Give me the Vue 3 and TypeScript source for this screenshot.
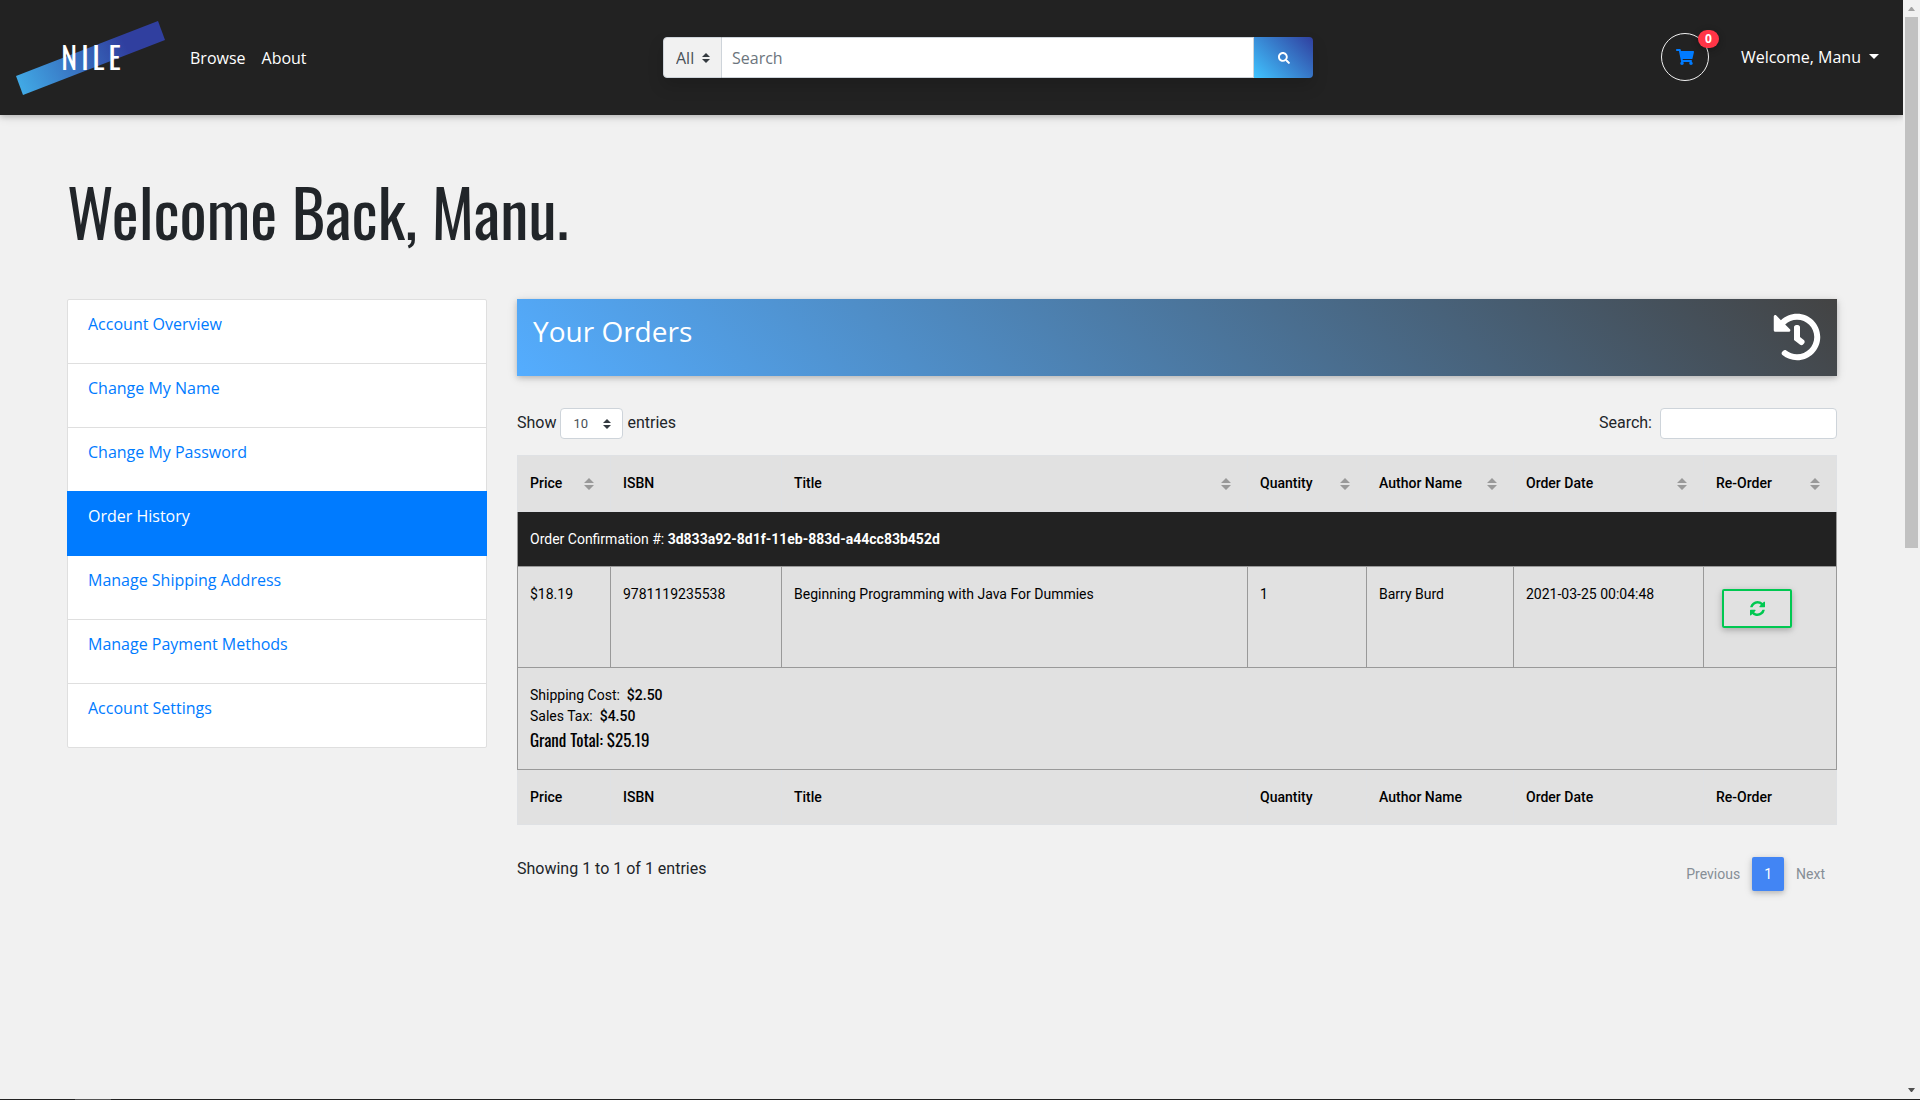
<script setup lang="ts">
import { ref } from 'vue'

interface Column {
  key: string
  label: string
  sortable: boolean
}

interface OrderItem {
  price: string
  isbn: string
  title: string
  quantity: number
  author: string
  date: string
}

const userName = 'Manu'
const category = ref('All')
const query = ref('')
const pageSize = ref('10')
const tableFilter = ref('')

const menu: string[] = [
  'Account Overview',
  'Change My Name',
  'Change My Password',
  'Order History',
  'Manage Shipping Address',
  'Manage Payment Methods',
  'Account Settings',
]
const activeItem = 'Order History'

const columns: Column[] = [
  { key: 'price', label: 'Price', sortable: true },
  { key: 'isbn', label: 'ISBN', sortable: false },
  { key: 'title', label: 'Title', sortable: true },
  { key: 'quantity', label: 'Quantity', sortable: true },
  { key: 'author', label: 'Author Name', sortable: true },
  { key: 'date', label: 'Order Date', sortable: true },
  { key: 'reorder', label: 'Re-Order', sortable: true },
]

const confirmation = '3d833a92-8d1f-11eb-883d-a44cc83b452d'
const items: OrderItem[] = [
  {
    price: '$18.19',
    isbn: '9781119235538',
    title: 'Beginning Programming with Java For Dummies',
    quantity: 1,
    author: 'Barry Burd',
    date: '2021-03-25 00:04:48',
  },
]
</script>

<template>
  <div class="window">
    <div class="viewport">
      <div class="page">
        <header class="navbar">
          <nav class="nav-left">
            <a class="brand" href="#" aria-label="NILE">
              <svg class="brand-band" viewBox="0 0 150 74" aria-hidden="true">
                <defs>
                  <linearGradient id="band" x1="0" y1="74" x2="150" y2="0" gradientUnits="userSpaceOnUse">
                    <stop offset="0" stop-color="#42b0ea" />
                    <stop offset="0.72" stop-color="#303f9f" />
                    <stop offset="1" stop-color="#303f9f" />
                  </linearGradient>
                </defs>
                <polygon points="0,55 142,0 149,19 7,74" fill="url(#band)" />
              </svg>
              <span class="brand-name">NILE</span>
            </a>
            <a class="nav-link" href="#">Browse</a>
            <a class="nav-link" href="#">About</a>
          </nav>

          <form class="search" role="search" @submit.prevent>
            <div class="category">
              <select v-model="category" aria-label="Category">
                <option>All</option>
              </select>
              <svg class="chevrons" viewBox="0 0 8 10" aria-hidden="true">
                <path d="M4 0 8 4H0zM4 10 0 6h8z" fill="#343a40" />
              </svg>
            </div>
            <input v-model="query" type="search" placeholder="Search" aria-label="Search" />
            <button type="submit" aria-label="Search">
              <svg viewBox="0 0 512 512" width="12" height="12" aria-hidden="true">
                <path
                  fill="#fff"
                  d="M505 442.700 405.300 343c-4.500-4.500-10.600-7-17-7H372c27.600-35.300 44-79.700 44-128C416 93.100 322.900 0 208 0S0 93.100 0 208s93.100 208 208 208c48.300 0 92.700-16.400 128-44v16.300c0 6.400 2.500 12.500 7 17l99.700 99.700c9.400 9.400 24.600 9.400 33.900 0l28.300-28.300c9.400-9.400 9.400-24.600.1-34zM208 336c-70.700 0-128-57.200-128-128 0-70.700 57.200-128 128-128 70.700 0 128 57.200 128 128 0 70.700-57.200 128-128 128z"
                />
              </svg>
            </button>
          </form>

          <div class="nav-right">
            <a class="cart" href="#" aria-label="Cart">
              <svg viewBox="0 0 576 512" width="18" height="16" aria-hidden="true">
                <path
                  fill="#007bff"
                  d="M528.120 301.319l47.273-208C578.806 78.301 567.391 64 551.990 64H159.208l-9.166-44.810C147.758 8.021 137.930 0 126.529 0H24C10.745 0 0 10.745 0 24v16c0 13.255 10.745 24 24 24h69.883l70.248 343.435C147.325 417.100 136 435.222 136 456c0 30.928 25.072 56 56 56s56-25.072 56-56c0-15.674-6.447-29.835-16.824-40h209.647C430.447 426.165 424 440.326 424 456c0 30.928 25.072 56 56 56s56-25.072 56-56c0-22.172-12.888-41.332-31.579-50.405l5.517-24.276c3.413-15.018-8.002-29.319-23.403-29.319H218.117l-6.545-32h293.145c11.206 0 20.920-7.754 23.403-18.681z"
                />
              </svg>
              <span class="badge">0</span>
            </a>
            <a class="user" href="#">
              Welcome, {{ userName }}
              <span class="caret"></span>
            </a>
          </div>
        </header>

        <main class="content">
          <h1>Welcome Back, {{ userName }}.</h1>
          <div class="columns">
            <ul class="menu">
              <li v-for="item in menu" :key="item" :class="{ active: item === activeItem }">
                <a href="#">{{ item }}</a>
              </li>
            </ul>

            <section class="orders">
              <div class="banner">
                <h2>Your Orders</h2>
                <svg viewBox="0 0 512 512" width="48" height="48" aria-hidden="true">
                  <path
                    fill="#fff"
                    d="M504 255.531c.253 136.640-111.180 248.372-247.820 248.468-59.015.042-113.223-20.530-155.822-54.911-11.077-8.940-11.905-25.541-1.839-35.607l11.267-11.267c8.609-8.609 22.353-9.551 31.891-1.984C173.062 425.135 212.781 440 256 440c101.705 0 184-82.311 184-184 0-101.705-82.311-184-184-184-48.814 0-93.149 18.969-126.068 49.932l50.754 50.754c10.080 10.080 2.941 27.314-11.313 27.314H24c-8.837 0-16-7.163-16-16V38.627c0-14.254 17.234-21.393 27.314-11.314l49.372 49.372C129.209 34.136 189.552 8 256 8c136.810 0 247.747 110.780 248 247.531zm-180.912 78.784l9.823-12.630c8.138-10.463 6.253-25.542-4.210-33.679L288 256.349V152c0-13.255-10.745-24-24-24h-16c-13.255 0-24 10.745-24 24v135.651l65.409 50.874c10.463 8.137 25.541 6.253 33.679-4.210z"
                  />
                </svg>
              </div>

              <div class="controls">
                <label class="length">
                  Show
                  <span class="length-box">
                    <select v-model="pageSize">
                      <option>10</option>
                    </select>
                    <svg class="chevrons" viewBox="0 0 8 10" aria-hidden="true">
                      <path d="M4 0 8 4H0zM4 10 0 6h8z" fill="#343a40" />
                    </svg>
                  </span>
                  entries
                </label>
                <label class="filter">
                  Search:
                  <input v-model="tableFilter" type="search" />
                </label>
              </div>

              <table>
                <colgroup>
                  <col v-for="c in columns" :key="c.key" :class="`col-${c.key}`" />
                </colgroup>
                <thead>
                  <tr>
                    <th v-for="c in columns" :key="c.key" scope="col">
                      <div class="th-inner">
                        {{ c.label }}
                        <svg v-if="c.sortable" viewBox="0 0 10 12" width="10" height="12" aria-hidden="true">
                          <path d="M5 0 10 5H0zM5 12 0 7h10z" fill="#999" />
                        </svg>
                      </div>
                    </th>
                  </tr>
                </thead>
                <tbody>
                  <tr class="confirmation">
                    <td colspan="7">Order Confirmation #: <b>{{ confirmation }}</b></td>
                  </tr>
                  <tr v-for="item in items" :key="item.isbn" class="item">
                    <td>{{ item.price }}</td>
                    <td>{{ item.isbn }}</td>
                    <td>{{ item.title }}</td>
                    <td>{{ item.quantity }}</td>
                    <td>{{ item.author }}</td>
                    <td>{{ item.date }}</td>
                    <td>
                      <button class="reorder" type="button" aria-label="Re-Order">
                        <svg viewBox="0 0 1536 1536" width="15" height="15" aria-hidden="true">
                          <path
                            fill="#00c851"
                            d="M1511 928q0 5-1 7-64 268-268 434.500T764 1536q-146 0-282.500-55T238 1324l-129 129q-19 19-45 19t-45-19-19-45V960q0-26 19-45t45-19h448q26 0 45 19t19 45-19 45l-137 137q71 66 161 102t187 36q134 0 250-65t186-179q11-17 53-117 8-23 30-23h192q13 0 22.500 9.500t9.500 22.500zm25-800v448q0 26-19 45t-45 19h-448q-26 0-45-19t-19-45 19-45l138-138Q969 256 768 256q-134 0-250 65T332 500q-11 17-53 117-8 23-30 23H50q-13 0-22.500-9.500T18 608v-7q65-268 270-434.500T768 0q146 0 284 55.500T1297 212l130-129q19-19 45-19t45 19 19 45z"
                          />
                        </svg>
                      </button>
                    </td>
                  </tr>
                  <tr class="summary">
                    <td colspan="7">
                      <div>Shipping Cost: &nbsp;<strong>$2.50</strong></div>
                      <div>Sales Tax: &nbsp;<strong>$4.50</strong></div>
                      <div class="total">Grand Total: $25.19</div>
                    </td>
                  </tr>
                </tbody>
                <tfoot>
                  <tr>
                    <th v-for="c in columns" :key="c.key" scope="col">{{ c.label }}</th>
                  </tr>
                </tfoot>
              </table>

              <div class="table-footer">
                <p>Showing 1 to 1 of 1 entries</p>
                <nav class="pagination" aria-label="Pages">
                  <a href="#">Previous</a>
                  <a href="#" class="current" aria-current="page">1</a>
                  <a href="#">Next</a>
                </nav>
              </div>
            </section>
          </div>
        </main>
      </div>

      <div class="scrollbar" aria-hidden="true">
        <svg viewBox="0 0 7 4" width="7" height="4"><path d="M0 4 3 0h1l3 4z" fill="#a3a3a3" /></svg>
        <div class="track"><div class="thumb"></div></div>
        <svg viewBox="0 0 7 4" width="7" height="4"><path d="M0 0h7L4 4H3z" fill="#505050" /></svg>
      </div>
    </div>
    <div class="edge"><span></span></div>
  </div>
</template>

<style>
body {
  margin: 0;
  background: #f1f1f1;
}
</style>

<style scoped>
* {
  box-sizing: border-box;
}

.window {
  display: flex;
  flex-direction: column;
  min-height: 100vh;
  font-family: 'Open Sans', sans-serif;
  font-size: 16px;
  line-height: 24px;
  color: #212529;
  background: #f1f1f1;
}

.viewport {
  display: flex;
  flex: 1;
}

.page {
  flex: 1;
  min-width: 0;
}

a {
  text-decoration: none;
}

/* Navigation bar */
.navbar {
  display: flex;
  align-items: center;
  justify-content: space-between;
  height: 115px;
  padding: 0 24px 0 16px;
  background: #222;
  box-shadow: 0 2px 5px rgba(0, 0, 0, 0.16), 0 2px 10px rgba(0, 0, 0, 0.12);
}

.nav-left {
  display: flex;
  align-items: center;
  gap: 16px;
  width: 299px;
}

.brand {
  display: grid;
  place-items: center;
  width: 150px;
  margin-right: 8px;
}

.brand > * {
  grid-area: 1 / 1;
}

.brand-band {
  width: 150px;
  height: 74px;
}

.brand-name {
  padding: 0 0 2px 4px;
  font-family: Oswald, 'Liberation Sans Narrow', 'Liberation Sans', sans-serif;
  font-size: 30px;
  line-height: 40px;
  letter-spacing: 4px;
  color: #fff;
}

.nav-link,
.user {
  color: #fff;
}

.search {
  display: flex;
  width: 650px;
  height: 41px;
  border-radius: 4px;
  box-shadow: 0 8px 16px rgba(0, 0, 0, 0.15);
}

.category {
  display: grid;
  align-items: center;
  width: 59px;
}

.category > *,
.length-box > * {
  grid-area: 1 / 1;
}

select,
input {
  margin: 0;
  font: inherit;
  color: #495057;
  border: 1px solid #ced4da;
  border-radius: 4px;
  outline: none;
  appearance: none;
}

.category select {
  width: 59px;
  height: 41px;
  padding: 0 12px;
  background: #f1f1f1;
  border-radius: 4px 0 0 4px;
}

.chevrons {
  justify-self: end;
  width: 8px;
  height: 10px;
  margin-right: 12px;
  pointer-events: none;
}

.search input {
  flex: 1;
  min-width: 0;
  padding: 0 10px;
  background: #fff;
  border-left: 0;
  border-radius: 0;
}

.search input::placeholder {
  color: #6c757d;
  opacity: 1;
}

.search button {
  display: grid;
  place-items: center;
  width: 59px;
  padding: 0;
  background: linear-gradient(45deg, #40c4ff, #303f9f);
  border: 0;
  border-radius: 0 4px 4px 0;
}

.nav-right {
  display: flex;
  align-items: center;
  justify-content: space-between;
  width: 218px;
  padding-bottom: 2px;
}

.cart {
  position: relative;
  display: grid;
  place-items: center;
  width: 48px;
  height: 48px;
  border: 1px solid #f1f1f1;
  border-radius: 50%;
}

.badge {
  position: absolute;
  top: -4px;
  right: -11px;
  width: 21px;
  height: 18px;
  font-size: 12px;
  font-weight: 700;
  line-height: 18px;
  text-align: center;
  color: #fff;
  background: #ff3547;
  border-radius: 9px;
  box-shadow: 0 2px 5px rgba(0, 0, 0, 0.16), 0 2px 10px rgba(0, 0, 0, 0.12);
}

.user {
  display: flex;
  align-items: center;
  gap: 8px;
}

.caret {
  border: 5px solid transparent;
  border-top-color: #fff;
  border-bottom: 0;
}

/* Main area */
.content {
  padding: 54px 66px 48px 67px;
}

h1 {
  margin: 0 0 46px;
  font-family: Oswald, 'Liberation Sans Narrow', 'Liberation Sans', sans-serif;
  font-size: 64px;
  font-weight: 400;
  line-height: 84px;
}

.columns {
  display: grid;
  grid-template-columns: 7fr 22fr;
  gap: 30px;
  align-items: start;
}

.menu {
  margin: 0;
  padding: 0;
  list-style: none;
  background: #fff;
  border: 1px solid #dfdfdf;
  border-radius: 2px;
}

.menu li {
  height: 64px;
  padding: 12px 20px;
  border-bottom: 1px solid #dfdfdf;
}

.menu li:last-child {
  height: 63px;
  border-bottom: 0;
}

.menu a {
  color: #007bff;
}

.menu .active {
  margin: -1px -1px 0;
  height: 65px;
  padding: 13px 21px;
  background: #007bff;
  border-color: #007bff;
}

.menu .active a {
  color: #fff;
}

.orders {
  min-width: 0;
  font-family: Roboto, sans-serif;
}

.banner {
  display: flex;
  justify-content: space-between;
  height: 77px;
  padding: 14px 16px;
  color: #fff;
  background: linear-gradient(45deg, #54adff, #434343);
  box-shadow: 0 2px 5px rgba(0, 0, 0, 0.16), 0 2px 10px rgba(0, 0, 0, 0.12);
}

h2 {
  margin: 0;
  font-family: 'Open Sans', sans-serif;
  font-size: 28px;
  font-weight: 400;
  line-height: 36px;
}

.controls {
  display: flex;
  justify-content: space-between;
  margin: 32px 0 16px;
}

.controls label {
  display: flex;
  align-items: flex-start;
  line-height: 29px;
}

.length {
  gap: 4px;
}

.length-box {
  display: grid;
  align-items: center;
  width: 63px;
}

.controls select,
.controls input {
  height: 31px;
  font-size: 13px;
  background: #fff;
}

.controls select {
  width: 63px;
  padding: 0 12px;
}

.filter {
  gap: 8px;
}

.controls input {
  width: 177px;
  padding: 0 8px;
}

/* Orders table */
table {
  width: 100%;
  table-layout: fixed;
  border-collapse: collapse;
  font-size: 14px;
  line-height: 21px;
  color: #000;
  background: #e1e1e1;
}

.col-price {
  width: 93px;
}

.col-isbn {
  width: 171px;
}

.col-quantity {
  width: 119px;
}

.col-author {
  width: 147px;
}

.col-date {
  width: 190px;
}

.col-reorder {
  width: 133px;
}

th {
  padding: 0 12px;
  font-weight: 500;
  text-align: left;
  border: 1px solid #dfe1e4;
}

thead th {
  height: 56px;
}

tfoot th {
  height: 55px;
}

.th-inner {
  display: flex;
  align-items: center;
  justify-content: space-between;
  margin-right: 4px;
}

td {
  padding: 17px 12px 16px;
  vertical-align: top;
  border: 1px solid #999;
}

.confirmation td {
  color: #fff;
  background: #222;
  border-top-color: #222;
}

.item td {
  height: 101px;
}

.summary td {
  height: 102px;
}

b {
  font-weight: 700;
}

strong {
  font-weight: 500;
}

.total {
  font-family: Oswald, 'Liberation Sans Narrow', 'Liberation Sans', sans-serif;
  font-size: 17px;
  line-height: 26px;
}

.reorder {
  display: grid;
  place-items: center;
  width: 70px;
  height: 39px;
  margin: 5px 6px;
  padding: 0;
  background: transparent;
  border: 2px solid #00c851;
  border-radius: 2px;
  box-shadow: 0 2px 5px rgba(0, 0, 0, 0.16), 0 2px 10px rgba(0, 0, 0, 0.12);
}

.table-footer {
  display: flex;
  align-items: flex-start;
  justify-content: space-between;
  padding-top: 32px;
}

.table-footer p {
  margin: 0;
}

.pagination {
  display: flex;
  font-size: 14px;
}

.pagination a {
  padding: 0 12px;
  line-height: 34px;
  color: #868e96;
}

.pagination .current {
  color: #fff;
  background: #4285f4;
  border-radius: 2px;
  box-shadow: 0 2px 5px rgba(0, 0, 0, 0.16), 0 2px 10px rgba(0, 0, 0, 0.12);
}

/* Window scroll bar and lower edge */
.scrollbar {
  display: flex;
  flex-direction: column;
  align-items: center;
  width: 17px;
  padding: 7px 0;
  background: #f1f1f1;
}

.track {
  flex: 1;
  width: 13px;
  padding: 6px 0 10px;
}

.thumb {
  height: 50%;
  background: #c1c1c1;
}

.edge {
  height: 1px;
  padding-left: 75px;
  background: #222;
}

.edge span {
  display: block;
  width: 36px;
  height: 1px;
  background: #555;
}
</style>
